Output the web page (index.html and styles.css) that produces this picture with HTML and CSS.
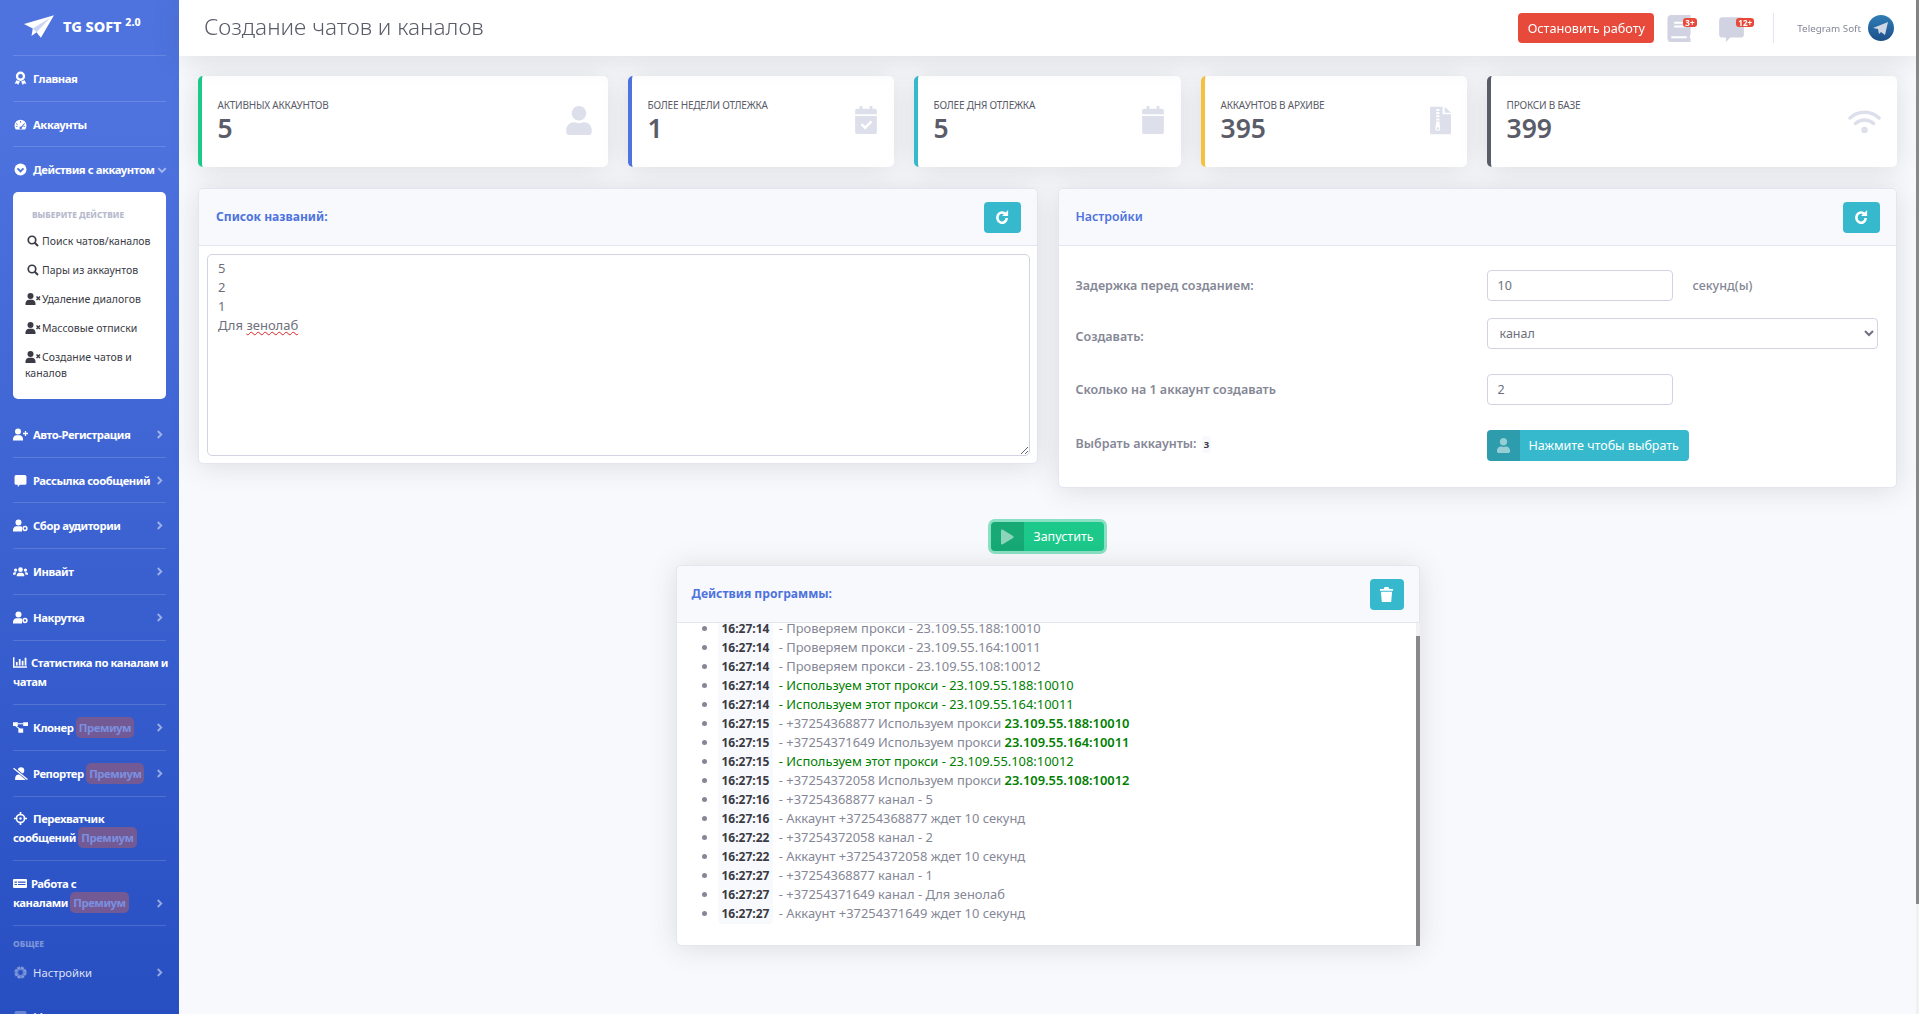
FILE: index.html
```html
<!DOCTYPE html>
<html lang="ru">
<head>
  <meta charset="UTF-8">
  <title>Создание чатов и каналов</title>
  <link rel="stylesheet" href="styles.css">
</head>
<body>

<svg class="icon-defs" xmlns="http://www.w3.org/2000/svg">
  <symbol id="i-plane" viewBox="0 0 48 36"><path d="M0 14 48 0 27 36 20 27 12 33 14 21Z"/><path d="M14 21 42 4 20 27Z" fill="#4e73df" opacity=".3"/></symbol>
  <symbol id="i-award" viewBox="0 0 24 24"><path fill-rule="evenodd" d="M12 1a8 8 0 1 1 0 16 8 8 0 0 1 0-16Zm0 4a4 4 0 1 0 0 8 4 4 0 0 0 0-8Z"/><path d="M5 16 2 22l4-.5 2 2.500 3-6ZM19 16l3 6-4-.5-2 2.500-3-6Z"/></symbol>
  <symbol id="i-gauge" viewBox="0 0 24 24"><path fill-rule="evenodd" d="M12 3a11 11 0 0 1 11 11c0 2.500-.6 4.500-1.700 6.300a1 1 0 0 1-.9.7H3.600a1 1 0 0 1-.9-.7A11.500 11.500 0 0 1 1 14 11 11 0 0 1 12 3Zm-.9 2.500v3h1.800v-3ZM5 9.500l-1.300 1.300 2 2L7 11.500Zm14 0-6 6.500a2.300 2.300 0 1 0 1.600 1.400l5.700-6.600ZM3.500 15v1.800h3V15Zm14 0v1.800h3V15Z"/></symbol>
  <symbol id="i-chev-circle" viewBox="0 0 24 24"><circle cx="12" cy="12" r="11"/><path d="m6.500 10 5.500 5.500 5.500-5.500" fill="none" stroke="#4e73df" stroke-width="3.500"/></symbol>
  <symbol id="i-chev-right" viewBox="0 0 12 16"><path d="m3 2 6 6-6 6" fill="none" stroke="currentColor" stroke-width="3.200"/></symbol>
  <symbol id="i-chev-down" viewBox="0 0 16 12"><path d="m2 3 6 6 6-6" fill="none" stroke="currentColor" stroke-width="3.200"/></symbol>
  <symbol id="i-search" viewBox="0 0 24 24"><circle cx="10" cy="10" r="7.500" fill="none" stroke="currentColor" stroke-width="3.400"/><path d="m15.500 15.500 6.500 6.500" stroke="currentColor" stroke-width="4"/></symbol>
  <symbol id="i-user" viewBox="0 0 448 512"><path d="M224 256c70.700 0 128-57.300 128-128S294.700 0 224 0 96 57.300 96 128s57.300 128 128 128zm89.600 32h-16.700c-22.200 10.200-46.900 16-72.900 16s-50.600-5.800-72.900-16h-16.700C60.200 288 0 348.200 0 422.400V464c0 26.500 21.500 48 48 48h352c26.500 0 48-21.500 48-48v-41.600c0-74.200-60.200-134.400-134.400-134.400z"/></symbol>
  <symbol id="i-user-x" viewBox="0 0 30 24"><circle cx="10" cy="6" r="6"/><path d="M0 24v-3c0-4.500 3.500-7.500 7-7.500h6c3.500 0 7 3 7 7.500v3Z"/><path d="m22 7 7 7m0-7-7 7" stroke="currentColor" stroke-width="3"/></symbol>
  <symbol id="i-user-plus" viewBox="0 0 30 24"><circle cx="10" cy="6" r="6"/><path d="M0 24v-3c0-4.500 3.500-7.500 7-7.500h6c3.500 0 7 3 7 7.500v3Z"/><path d="M25 5v10M20 10h10" stroke="currentColor" stroke-width="2.600"/></symbol>
  <symbol id="i-user-cog" viewBox="0 0 30 24"><circle cx="11" cy="6" r="6"/><path d="M0 24v-3c0-4.500 3.500-7.500 7-7.500h8l3 1v9.500Z"/><circle cx="24" cy="18" r="3.800" fill="none" stroke="currentColor" stroke-width="3"/></symbol>
  <symbol id="i-users" viewBox="0 0 32 24"><circle cx="16" cy="8" r="5"/><path d="M8 22v-2c0-3.500 3-5.500 5-5.500h6c2 0 5 2 5 5.500v2Z"/><circle cx="5.500" cy="9" r="3.500"/><circle cx="26.500" cy="9" r="3.500"/><path d="M0 19v-2c0-2.500 2-3.500 3-3.500h4c-1 1.500-1.500 3-1.500 5.500ZM32 19v-2c0-2.500-2-3.500-3-3.500h-4c1 1.500 1.500 3 1.500 5.500Z"/></symbol>
  <symbol id="i-comment" viewBox="0 0 24 24"><path d="M4 2h16a3 3 0 0 1 3 3v12a3 3 0 0 1-3 3H11l-4 4v-4H4a3 3 0 0 1-3-3V5a3 3 0 0 1 3-3Z"/></symbol>
  <symbol id="i-chart" viewBox="0 0 24 20"><path d="M0 1h2.500v15.500H24V19H0Z"/><path d="M5 9h3v6H5ZM10 4h3v11h-3ZM15 7h3v8h-3ZM20 2h3v13h-3Z"/></symbol>
  <symbol id="i-diagram" viewBox="0 0 28 24"><path d="M0 2h9v7H0ZM19 2h9v7h-9ZM10 14h9v8h-9Z"/><path d="M9 5h10M5 9l8 6" stroke="currentColor" stroke-width="2" fill="none"/></symbol>
  <symbol id="i-user-slash" viewBox="0 0 28 24"><circle cx="15" cy="6.500" r="6"/><path d="M4 24v-3c0-4 3-7 7-7h8l5 10Z"/><path d="m1 2 26 21" stroke="#3156c6" stroke-width="5"/><path d="m1 2 26 21" stroke="currentColor" stroke-width="2.400"/></symbol>
  <symbol id="i-crosshair" viewBox="0 0 24 24"><circle cx="12" cy="12" r="7.500" fill="none" stroke="currentColor" stroke-width="3"/><circle cx="12" cy="12" r="2.200"/><path d="M12 0v6M12 18v6M0 12h6M18 12h6" stroke="currentColor" stroke-width="3"/></symbol>
  <symbol id="i-table" viewBox="0 0 28 20"><path fill-rule="evenodd" d="M2 1h24a2 2 0 0 1 2 2v14a2 2 0 0 1-2 2H2a2 2 0 0 1-2-2V3a2 2 0 0 1 2-2Zm1 5v2.500h5V6Zm7 0v2.500h15V6ZM3 11v2h5v-2Zm7 0v2h15v-2Z"/></symbol>
  <symbol id="i-cog" viewBox="0 0 24 24"><circle cx="12" cy="12" r="7" fill="none" stroke="currentColor" stroke-width="5"/><circle cx="12" cy="12" r="9.800" fill="none" stroke="currentColor" stroke-width="3.600" stroke-dasharray="5.500 2.200"/></symbol>
  <symbol id="i-cal-check" viewBox="0 0 24 32"><path d="M5 0h3v4H5ZM16 0h3v4h-3Z"/><path d="M2 3h20a2 2 0 0 1 2 2v4H0V5a2 2 0 0 1 2-2Z"/><path fill-rule="evenodd" d="M0 11h24v18a2 2 0 0 1-2 2H2a2 2 0 0 1-2-2Zm6 10 5 5 8-8-2-2-6 6-3-3Z"/></symbol>
  <symbol id="i-calendar" viewBox="0 0 24 32"><path d="M5 0h3v4H5ZM16 0h3v4h-3Z"/><path d="M2 3h20a2 2 0 0 1 2 2v4H0V5a2 2 0 0 1 2-2Z"/><path d="M0 11h24v18a2 2 0 0 1-2 2H2a2 2 0 0 1-2-2Z"/></symbol>
  <symbol id="i-archive" viewBox="0 0 20 26"><path fill-rule="evenodd" d="M1 0h11v7h8v18a1 1 0 0 1-1 1H1a1 1 0 0 1-1-1V1a1 1 0 0 1 1-1Zm5 2v2h3V2Zm0 3v2h3V5Zm0 3v2h3V8Zm0 3v2h3v-2Zm0 3 -1 7a2.500 2.500 0 0 0 4.800 0L9 14Zm1.500 5.500a1.200 1.200 0 1 1 0 2.400 1.200 1.200 0 0 1 0-2.400Z"/><path d="M14 0l6 5.500h-6Z"/></symbol>
  <symbol id="i-wifi" viewBox="0 0 33 24"><path d="M2 9a21 21 0 0 1 29 0M7.500 14.500a13.500 13.500 0 0 1 18 0" fill="none" stroke="currentColor" stroke-width="3.500" stroke-linecap="round"/><circle cx="16.500" cy="21" r="3.300"/></symbol>
  <symbol id="i-book" viewBox="0 0 24 28"><path fill-rule="evenodd" d="M4 0h20v20c-1 1-1 4 0 5v3H4a4 4 0 0 1-4-4V4a4 4 0 0 1 4-4Zm3 7v2h12V7Zm0 4v2h12v-2ZM4 22v2h16v-2Z"/></symbol>
  <symbol id="i-redo" viewBox="0 0 16 16"><path d="M12.500 8.500a5 5.500 0 1 1-1.400-4.200" fill="none" stroke="currentColor" stroke-width="2.800"/><path d="M14 0v6.500H7.500Z"/></symbol>
  <symbol id="i-trash" viewBox="0 0 14 16"><path d="M0 2h4l1-2h4l1 2h4v2H0ZM1 5h12l-1 11H2Z"/></symbol>
  <symbol id="i-play" viewBox="0 0 14 16"><path d="M0 1c0-1 1-1.300 2-.8l11 6.800c.8.500.8 1.500 0 2L2 15.800c-1 .5-2 .2-2-.8Z"/></symbol>
</svg>

<div class="page-scroll"></div>

<div class="wrapper">

  <aside class="sidebar">
    <a class="brand">
      <svg class="brand-logo"><use href="#i-plane"/></svg>
      <span class="brand-text">TG SOFT <sup>2.0</sup></span>
    </a>
    <div class="nav-item"><span class="nav-text"><svg class="ico ico-award"><use href="#i-award"/></svg>Главная</span></div>
    <div class="nav-item"><span class="nav-text"><svg class="ico"><use href="#i-gauge"/></svg>Аккаунты</span></div>
    <div class="nav-item nav-open">
      <span class="nav-text"><svg class="ico"><use href="#i-chev-circle"/></svg>Действия с аккаунтом</span>
      <svg class="nav-chev-down"><use href="#i-chev-down"/></svg>
    </div>
    <div class="submenu">
      <h6>Выберите действие</h6>
      <a class="sub-link"><svg class="sub-ico"><use href="#i-search"/></svg>Поиск чатов/каналов</a>
      <a class="sub-link"><svg class="sub-ico"><use href="#i-search"/></svg>Пары из аккаунтов</a>
      <a class="sub-link"><svg class="sub-ico-wide"><use href="#i-user-x"/></svg>Удаление диалогов</a>
      <a class="sub-link"><svg class="sub-ico-wide"><use href="#i-user-x"/></svg>Массовые отписки</a>
      <a class="sub-link"><svg class="sub-ico-wide"><use href="#i-user-x"/></svg>Создание чатов и каналов</a>
    </div>
    <div class="nav-item"><span class="nav-text"><svg class="ico"><use href="#i-user-plus"/></svg>Авто-Регистрация</span><svg class="nav-chev"><use href="#i-chev-right"/></svg></div>
    <div class="nav-item"><span class="nav-text"><svg class="ico"><use href="#i-comment"/></svg>Рассылка сообщений</span><svg class="nav-chev"><use href="#i-chev-right"/></svg></div>
    <div class="nav-item"><span class="nav-text"><svg class="ico"><use href="#i-user-cog"/></svg>Сбор аудитории</span><svg class="nav-chev"><use href="#i-chev-right"/></svg></div>
    <div class="nav-item"><span class="nav-text"><svg class="ico"><use href="#i-users"/></svg>Инвайт</span><svg class="nav-chev"><use href="#i-chev-right"/></svg></div>
    <div class="nav-item"><span class="nav-text"><svg class="ico"><use href="#i-user-cog"/></svg>Накрутка</span><svg class="nav-chev"><use href="#i-chev-right"/></svg></div>
    <div class="nav-item"><span class="nav-text"><svg class="ico ico-tight"><use href="#i-chart"/></svg>Статистика по каналам и<br>чатам</span></div>
    <div class="nav-item"><span class="nav-text"><svg class="ico"><use href="#i-diagram"/></svg>Клонер <span class="premium">Премиум</span></span><svg class="nav-chev"><use href="#i-chev-right"/></svg></div>
    <div class="nav-item"><span class="nav-text"><svg class="ico"><use href="#i-user-slash"/></svg>Репортер <span class="premium">Премиум</span></span><svg class="nav-chev"><use href="#i-chev-right"/></svg></div>
    <div class="nav-item"><span class="nav-text"><svg class="ico"><use href="#i-crosshair"/></svg>Перехватчик<br>сообщений <span class="premium">Премиум</span></span></div>
    <div class="nav-item"><span class="nav-text"><svg class="ico ico-tight"><use href="#i-table"/></svg>Работа с<br>каналами <span class="premium">Премиум</span></span><svg class="nav-chev nav-chev-low"><use href="#i-chev-right"/></svg></div>
    <div class="nav-heading">Общее</div>
    <div class="nav-item nav-plain"><span class="nav-text"><svg class="ico"><use href="#i-cog"/></svg>Настройки</span><svg class="nav-chev"><use href="#i-chev-right"/></svg></div>
    <div class="nav-item nav-plain"><span class="nav-text"><svg class="ico"><use href="#i-comment"/></svg>Мануалы</span></div>
  </aside>

  <div class="content">
    <nav class="topbar">
      <h1 class="page-title">Создание чатов и каналов</h1>
      <button class="btn-stop">Остановить работу</button>
      <span class="top-icon top-book"><svg><use href="#i-book"/></svg><b class="top-badge">3+</b></span>
      <span class="top-icon top-chat"><svg><use href="#i-comment"/></svg><b class="top-badge">12+</b></span>
      <span class="top-divider"></span>
      <span class="top-user">Telegram Soft</span>
      <svg class="avatar" viewBox="0 0 26 26">
        <defs><linearGradient id="avatar-bg" x1="0" y1="0" x2="0" y2="1"><stop offset="0" stop-color="#2f7db8"/><stop offset="1" stop-color="#1d4f88"/></linearGradient></defs>
        <circle cx="13" cy="13" r="13" fill="url(#avatar-bg)"/>
        <path d="M5 13 20 7l-3 13-4-3-2 2-1-5Z" fill="#cfd6e4"/>
      </svg>
    </nav>

    <main class="main">
      <section class="stats">
        <div class="stat stat-green">
          <div><div class="stat-label">Активных аккаунтов</div><div class="stat-value">5</div></div>
          <svg class="stat-ico stat-ico-user"><use href="#i-user"/></svg>
        </div>
        <div class="stat stat-blue">
          <div><div class="stat-label">Более недели отлежка</div><div class="stat-value">1</div></div>
          <svg class="stat-ico"><use href="#i-cal-check"/></svg>
        </div>
        <div class="stat stat-teal">
          <div><div class="stat-label">Более дня отлежка</div><div class="stat-value">5</div></div>
          <svg class="stat-ico"><use href="#i-calendar"/></svg>
        </div>
        <div class="stat stat-yellow">
          <div><div class="stat-label">Аккаунтов в архиве</div><div class="stat-value">395</div></div>
          <svg class="stat-ico stat-ico-file"><use href="#i-archive"/></svg>
        </div>
        <div class="stat stat-dark">
          <div><div class="stat-label">Прокси в базе</div><div class="stat-value">399</div></div>
          <svg class="stat-ico stat-ico-wifi"><use href="#i-wifi"/></svg>
        </div>
      </section>

      <section class="panels">
        <div class="card">
          <div class="card-head">
            <h6>Список названий:</h6>
            <button class="btn-teal"><svg><use href="#i-redo"/></svg></button>
          </div>
          <div class="names-body">
            <div class="names-box">5<br>2<br>1<br>Для <span class="misspelled">зенолаб</span></div>
          </div>
        </div>

        <div class="card">
          <div class="card-head">
            <h6 class="head-light">Настройки</h6>
            <button class="btn-teal"><svg><use href="#i-redo"/></svg></button>
          </div>
          <div class="settings">
            <label class="field-label" for="delay">Задержка перед созданием:</label>
            <div class="field"><input id="delay" class="input-short" value="10"><span class="unit">секунд(ы)</span></div>
            <label class="field-label label-tight" for="kind">Создавать:</label>
            <div class="field field-tight"><select id="kind" class="input-wide"><option>канал</option></select></div>
            <label class="field-label" for="count">Сколько на 1 аккаунт создавать</label>
            <div class="field"><input id="count" class="input-short" value="2"></div>
            <span class="field-label label-pick">Выбрать аккаунты: <code class="count-code">3</code></span>
            <div class="field">
              <button class="btn-split btn-split-teal"><span class="split-ico"><svg class="split-user"><use href="#i-user"/></svg></span><span class="split-text">Нажмите чтобы выбрать</span></button>
            </div>
          </div>
        </div>
      </section>

      <div class="run-row">
        <button class="btn-split btn-run"><span class="split-ico"><svg class="split-play"><use href="#i-play"/></svg></span><span class="split-text">Запустить</span></button>
      </div>

      <section class="card log-card">
        <div class="card-head">
          <h6>Действия программы:</h6>
          <button class="btn-teal btn-trash"><svg><use href="#i-trash"/></svg></button>
        </div>
        <div class="log-scroll" id="log">
          <ul class="log">
            <li><code>16:27:14</code> - Проверяем прокси - 23.109.55.188:10010</li>
            <li><code>16:27:14</code> - Проверяем прокси - 23.109.55.164:10011</li>
            <li><code>16:27:14</code> - Проверяем прокси - 23.109.55.108:10012</li>
            <li class="ok"><code>16:27:14</code> - Используем этот прокси - 23.109.55.188:10010</li>
            <li class="ok"><code>16:27:14</code> - Используем этот прокси - 23.109.55.164:10011</li>
            <li><code>16:27:15</code> - +37254368877 Используем прокси <b>23.109.55.188:10010</b></li>
            <li><code>16:27:15</code> - +37254371649 Используем прокси <b>23.109.55.164:10011</b></li>
            <li class="ok"><code>16:27:15</code> - Используем этот прокси - 23.109.55.108:10012</li>
            <li><code>16:27:15</code> - +37254372058 Используем прокси <b>23.109.55.108:10012</b></li>
            <li><code>16:27:16</code> - +37254368877 канал - 5</li>
            <li><code>16:27:16</code> - Аккаунт +37254368877 ждет 10 секунд</li>
            <li><code>16:27:22</code> - +37254372058 канал - 2</li>
            <li><code>16:27:22</code> - Аккаунт +37254372058 ждет 10 секунд</li>
            <li><code>16:27:27</code> - +37254368877 канал - 1</li>
            <li><code>16:27:27</code> - +37254371649 канал - Для зенолаб</li>
            <li><code>16:27:27</code> - Аккаунт +37254371649 ждет 10 секунд</li>
          </ul>
        </div>
        <div class="log-track"></div>
      </section>
    </main>
  </div>
</div>

<script>
  const logBox = document.getElementById("log");
  logBox.scrollTop = logBox.scrollHeight;
</script>
</body>
</html>
```

FILE: styles.css
```css
html {
  overflow-y: scroll;
  scrollbar-width: none;
}

body {
  margin: 0;
  font-family: "Noto Sans", "Open Sans", sans-serif;
  font-size: 12.500px;
  color: #858796;
  background-color: #f8f9fc;
}

.icon-defs {
  display: none;
}

svg {
  fill: currentColor;
}

/* Thin custom scrollbars lie over the page edge */
.page-scroll {
  position: fixed;
  top: 0;
  right: 0;
  bottom: 0;
  width: 3px;
  background-color: #f1f1f1;
}

.page-scroll::before {
  content: "";
  display: block;
  height: 904px;
  background-color: #888;
}

.wrapper {
  display: flex;
  min-height: 1137px;
}

/* Sidebar */
.sidebar {
  flex: 0 0 179px;
  box-sizing: border-box;
  width: 179px;
  padding: 0 13px;
  color: #fff;
  background: linear-gradient(180deg, #4e73df 10%, #224abe 100%);
  font-size: 11.300px;
  font-weight: 700;
  letter-spacing: -0.45px;
}

.brand {
  display: flex;
  align-items: center;
  height: 56px;
  box-sizing: border-box;
  padding-left: 11px;
  padding-bottom: 3px;
  border-bottom: 1px solid rgba(255, 255, 255, 0.15);
}

.brand-logo {
  width: 30px;
  height: 23px;
  margin-right: 9px;
}

.brand-text {
  font-size: 14.500px;
  font-weight: 800;
  letter-spacing: 0;
}

.brand-text sup {
  font-size: 10.500px;
  line-height: 0;
}

.nav-item {
  display: flex;
  align-items: center;
  padding: 12.850px 0;
  line-height: 19px;
  white-space: nowrap;
  border-bottom: 1px solid rgba(255, 255, 255, 0.15);
}

.nav-open {
  border-bottom: none;
}

.nav-text {
  flex: 1;
}

.ico {
  width: 15px;
  height: 13px;
  margin-right: 5px;
  vertical-align: -2px;
}

.ico-award {
  height: 14px;
}

.ico-tight {
  width: 14px;
  margin-right: 4px;
}

.nav-chev {
  flex: none;
  width: 7px;
  height: 11px;
  margin: 0 3px;
  color: rgba(255, 255, 255, 0.5);
}

.nav-chev-low {
  align-self: flex-end;
  margin-bottom: 3px;
}

.nav-chev-down {
  flex: none;
  width: 10px;
  height: 8px;
  margin-left: 2px;
  color: rgba(255, 255, 255, 0.5);
}

.premium {
  display: inline-block;
  margin: -1px 0;
  padding: 0 3px;
  border-radius: 5px;
  line-height: 21px;
  color: #7a90e0;
  background-color: #745a94;
}

.submenu {
  box-sizing: border-box;
  height: 207px;
  margin-bottom: 13px;
  padding: 15px 0 0;
  border-radius: 5px;
  color: #3a3b45;
  background-color: #fff;
  font-size: 10.500px;
  font-weight: 400;
  letter-spacing: 0;
}

.submenu h6 {
  margin: 0 0 4px;
  padding-left: 19px;
  font-size: 8.400px;
  line-height: 16px;
  font-weight: 800;
  text-transform: uppercase;
  color: #b7b9cc;
}

.sub-link {
  display: block;
  padding: 6.400px 12px;
  line-height: 16px;
}

.sub-ico {
  width: 12px;
  height: 12px;
  margin: 0 3px 0 2px;
  vertical-align: -2px;
}

.sub-ico-wide {
  width: 16px;
  height: 12px;
  margin-right: 1px;
  vertical-align: -2px;
}

.nav-heading {
  padding-top: 12px;
  font-size: 8.500px;
  line-height: 12px;
  font-weight: 800;
  letter-spacing: 0;
  text-transform: uppercase;
  color: rgba(255, 255, 255, 0.4);
}

.nav-plain {
  border-bottom: none;
  font-weight: 400;
  letter-spacing: 0;
  color: rgba(255, 255, 255, 0.85);
}

.nav-plain .ico {
  color: rgba(255, 255, 255, 0.3);
}

/* Top bar */
.content {
  flex: 1;
  min-width: 0;
  margin-right: 3px;
}

.topbar {
  display: flex;
  align-items: center;
  position: relative;
  height: 56px;
  padding: 0 22px 0 25px;
  background-color: #fff;
  box-shadow: 0 2px 28px rgba(58, 59, 69, 0.15);
}

.page-title {
  flex: 1;
  margin: 0 0 3px;
  font-size: 22.600px;
  font-weight: 300;
  color: #5a5c69;
}

.btn-stop {
  height: 30px;
  width: 136px;
  padding: 0;
  border: none;
  border-radius: 4px;
  font: inherit;
  font-size: 12.700px;
  color: #fff;
  background-color: #e74a3b;
}

.top-icon {
  display: block;
  position: relative;
  color: #d1d3e2;
}

.top-icon svg {
  display: block;
}

.top-book {
  margin-left: 13px;
}

.top-book svg {
  width: 24px;
  height: 27px;
}

.top-chat {
  margin-left: 27px;
}

.top-chat svg {
  width: 27px;
  height: 27px;
}

.top-badge {
  position: absolute;
  top: 3px;
  left: 16px;
  padding: 0 2px;
  border-radius: 3px;
  font-size: 8px;
  line-height: 9px;
  color: #fff;
  background-color: #e74a3b;
}

.top-chat .top-badge {
  left: 18px;
}

.top-divider {
  width: 1px;
  height: 30px;
  margin: 0 23px 0 28px;
  background-color: #e3e6f0;
}

.top-user {
  font-size: 9.800px;
  color: #858796;
}

.avatar {
  width: 26px;
  height: 26px;
  margin-left: 7px;
}

/* Main area */
.main {
  padding: 20px 19px 0 19px;
}

.stats {
  display: grid;
  grid-template-columns: 410px 266px 267px 266px 1fr;
  gap: 20px;
}

.stat {
  display: flex;
  align-items: center;
  justify-content: space-between;
  box-sizing: border-box;
  height: 91px;
  padding: 0 16px 2px 15.500px;
  border-left: 4px solid;
  border-radius: 5px;
  background-color: #fff;
  box-shadow: 0 2px 28px rgba(58, 59, 69, 0.15);
}

.stat-green { border-left-color: #1cc88a; }
.stat-blue { border-left-color: #4e73df; }
.stat-teal { border-left-color: #36b9cc; }
.stat-yellow { border-left-color: #f6c23e; }
.stat-dark { border-left-color: #5a5c69; }

.stat-label {
  font-size: 10px;
  line-height: 15px;
  letter-spacing: -0.2px;
  text-transform: uppercase;
  color: #5a5c69;
}

.stat-value {
  font-size: 26.500px;
  line-height: 31px;
  font-weight: 600;
  color: #5a5c69;
}

.stat-ico {
  flex: none;
  width: 24px;
  height: 29px;
  color: #dddfeb;
}

.stat-ico-user {
  width: 26px;
}

.stat-ico-file {
  width: 21px;
}

.stat-ico-wifi {
  width: 33px;
  height: 24px;
}

.panels {
  display: flex;
  align-items: flex-start;
  gap: 20px;
  margin-top: 21px;
}

.card {
  flex: 1 1 0;
  min-width: 0;
  border: 1px solid #e3e6f0;
  border-radius: 5px;
  background-color: #fff;
  box-shadow: 0 2px 28px rgba(58, 59, 69, 0.15);
}

.card-head {
  display: flex;
  align-items: center;
  justify-content: space-between;
  height: 56px;
  padding: 0 16px 0 17px;
  border-bottom: 1px solid #e3e6f0;
  border-radius: 5px 5px 0 0;
  background-color: #f8f9fc;
}

.card-head h6 {
  margin: 0 0 2px;
  font-size: 12.100px;
  font-weight: 700;
  color: #4e73df;
}

.card-head .head-light {
  font-size: 12.300px;
  font-weight: 600;
}

.btn-teal {
  display: flex;
  align-items: center;
  justify-content: center;
  width: 37px;
  height: 31px;
  padding: 0;
  border: none;
  border-radius: 4px;
  color: #fff;
  background-color: #36b9cc;
}

.btn-teal svg {
  width: 15px;
  height: 15px;
}

.btn-trash {
  width: 34px;
}

.names-body {
  padding: 8px 7px 7px 8px;
}

.names-box {
  box-sizing: border-box;
  height: 202px;
  padding: 4px 10px;
  border: 1px solid #d1d3e2;
  border-radius: 5px;
  font-size: 13px;
  line-height: 19px;
  color: #6e707e;
  overflow: auto;
  resize: vertical;
}

.misspelled {
  text-decoration: underline wavy #e02020 1px;
}

.settings {
  display: grid;
  grid-template-columns: 411px 1fr;
  row-gap: 25px;
  align-items: center;
  padding: 24px 18px 26px 17px;
}

.field-label {
  font-weight: 600;
  color: #858796;
}

.label-tight {
  margin-top: -2px;
}

.label-pick {
  margin-bottom: 5px;
}

.field {
  display: flex;
  align-items: center;
}

.field-tight {
  margin-top: -8px;
}

.settings input,
.settings select {
  box-sizing: border-box;
  height: 31px;
  border: 1px solid #d1d3e2;
  border-radius: 4px;
  font: inherit;
  color: #6e707e;
  background-color: #fff;
}

.input-short {
  width: 186px;
  padding: 0 10px;
}

.input-wide {
  width: 100%;
  padding: 0 8px;
}

.unit {
  margin-left: 20px;
  font-weight: 500;
}

.count-code {
  margin-left: 2px;
  padding: 2px;
  border-radius: 3px;
  font-family: "Noto Sans", sans-serif;
  font-size: 9.500px;
  font-weight: 700;
  color: #3a3b45;
  background-color: #f8f9fc;
}

.btn-split {
  display: inline-flex;
  align-items: stretch;
  height: 31px;
  padding: 0;
  border: none;
  border-radius: 4px;
  overflow: hidden;
  font: inherit;
  color: #fff;
}

.btn-split-teal {
  background-color: #36b9cc;
}

.split-ico {
  display: flex;
  align-items: center;
  justify-content: center;
  width: 33px;
  background-color: rgba(0, 0, 0, 0.15);
}

.split-text {
  display: flex;
  align-items: center;
  padding: 0 10px 0 9px;
}

.split-user {
  width: 13px;
  height: 15px;
  color: rgba(255, 255, 255, 0.5);
}

.run-row {
  display: flex;
  justify-content: center;
  margin-top: 34px;
  margin-bottom: 14px;
}

.btn-run {
  height: 29px;
  background-color: #1cc88a;
  box-shadow: 0 0 0 3px rgba(28, 200, 138, 0.5);
}

.split-play {
  width: 13px;
  height: 16px;
  color: rgba(255, 255, 255, 0.5);
}

.log-card {
  position: relative;
  width: 744px;
  margin: 0 auto;
  box-sizing: border-box;
}

.log-card .card-head {
  padding-left: 15px;
  padding-right: 15px;
}

.log-scroll {
  height: 322px;
  overflow-y: scroll;
  scrollbar-width: none;
}

.log-track {
  position: absolute;
  top: 57px;
  right: -1px;
  bottom: -1px;
  width: 4px;
  background-color: #f1f1f1;
}

.log-track::before {
  content: "";
  position: absolute;
  top: 13px;
  bottom: 0;
  left: 0;
  right: 0;
  background-color: #888;
}

.log {
  margin: 0;
  padding: 8.500px 0 22.500px 41px;
  font-size: 12.900px;
  line-height: 19px;
  color: #858796;
}

.log code {
  margin-right: 2px;
  padding: 2px 4px;
  border-radius: 4px;
  font-family: "Noto Sans", sans-serif;
  font-size: 12px;
  font-weight: 700;
  color: #3a3b45;
  background-color: #f8f9fc;
}

.log .ok {
  color: #008000;
}

.log b {
  font-weight: 600;
  color: #008000;
}

.log li::marker {
  color: #858796;
}
```
